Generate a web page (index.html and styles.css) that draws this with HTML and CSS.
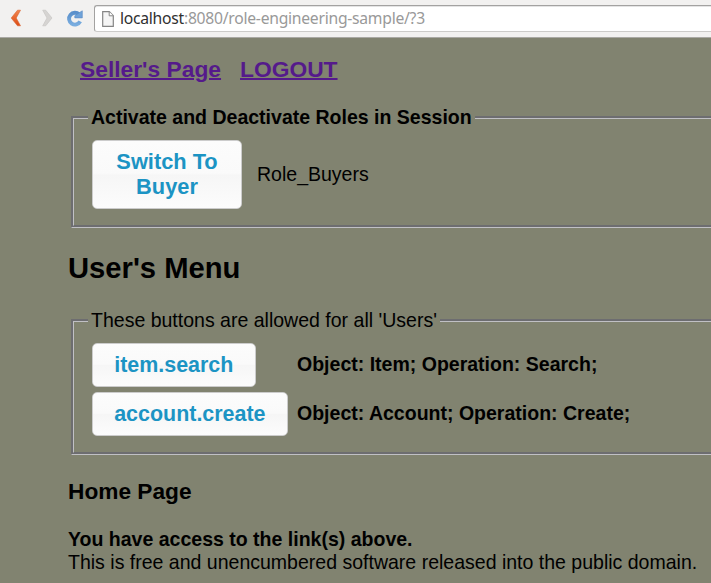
FILE: index.html
```html
<!DOCTYPE html>
<html lang="en">
<head>
<meta charset="utf-8">
<title>Home Page</title>
<link rel="stylesheet" href="styles.css">
</head>
<body>
<header class="toolbar">
  <svg class="nav-icons" width="94" height="37" viewBox="0 0 94 37" aria-hidden="true">
    <defs>
      <linearGradient id="warm" x1="0" y1="0" x2="0" y2="1"><stop offset="0" stop-color="#f2854f"/><stop offset="1" stop-color="#dc4c14"/></linearGradient>
      <linearGradient id="cool" x1="0" y1="0" x2="0" y2="1"><stop offset="0" stop-color="#5b90cb"/><stop offset="1" stop-color="#79addf"/></linearGradient>
    </defs>
    <path d="M17.5 10.2H20.5L16.2 18L20.5 25.8H17.5L11.2 18Z" fill="url(#warm)" stroke="#d9632f" stroke-width=".6" stroke-linejoin="round"/>
    <path d="M42.7 10.2H45.7L52 18L45.7 25.8H42.7L47 18Z" fill="#d6d4d2" stroke="#c5c3c1" stroke-width=".6" stroke-linejoin="round"/>
    <path d="M79.2 14.6A5.9 5.9 0 1 0 80.2 21.4" fill="none" stroke="url(#cool)" stroke-width="3.9"/>
    <path d="M82.3 10.8V17.9H74.8V15.8L80 12.2Z" fill="#6fa2d8" stroke="#5589c4" stroke-width=".6"/>
  </svg>
  <div class="address">
    <svg class="page-icon" width="12" height="16" viewBox="0 0 12 16" aria-hidden="true">
      <path d="M.7.7H7.3L11.3 4.7V15.3H.7Z" fill="#f5f5f5" stroke="#858585" stroke-width="1.2"/>
      <path d="M7.2.8V4.8H11.2" fill="#fff" stroke="#858585"/>
    </svg>
    <span class="url"><span class="host">localhost</span>:8080/role-engineering-sample/?3</span>
  </div>
</header>
<main class="page">
  <nav class="links"><a href="#">Seller's Page</a><a href="#">LOGOUT</a></nav>
  <fieldset class="roles">
    <legend><b>Activate and Deactivate Roles in Session</b></legend>
    <div class="role-row"><button class="btn switch">Switch To Buyer</button><span class="role">Role_Buyers</span></div>
  </fieldset>
  <h2>User's Menu</h2>
  <fieldset class="menu">
    <legend>These buttons are allowed for all 'Users'</legend>
    <div class="menu-grid">
      <button class="btn">item.search</button><b>Object: Item; Operation: Search;</b>
      <button class="btn">account.create</button><b>Object: Account; Operation: Create;</b>
    </div>
  </fieldset>
  <h3>Home Page</h3>
  <p><b>You have access to the link(s) above.</b><br>This is free and unencumbered software released into the public domain.</p>
</main>
</body>
</html>
```
FILE: styles.css
```css
* { box-sizing: border-box; }
body {
  margin: 0;
  height: 583px;
  overflow: hidden;
  background: #818370;
  color: #000;
  font: 19.53px/23px "Liberation Sans", Arial, sans-serif;
}
.toolbar {
  display: flex;
  height: 38px;
  background: #f2f1f0;
  border-bottom: 1px solid #aaa9a4;
}
.nav-icons { flex: none; }
.address {
  display: flex;
  flex: 1;
  height: 27px;
  margin-top: 5px;
  padding: 5px 0 0 7px;
  background: #fff;
  border: 1px solid #a3a2a1;
  border-right: 0;
  border-bottom-color: #cccbc9;
  border-radius: 3px 0 0 3px;
  box-shadow: inset 0 1px #e4e4e4;
}
.page-icon { flex: none; margin-right: 6px; }
.url {
  font: 15.7px/22px "Noto Sans", sans-serif;
  letter-spacing: -.26px;
  margin-top: -4px;
  color: #999;
  white-space: nowrap;
}
.host { color: #303030; }
.page { padding-left: 68px; }
.links {
  display: flex;
  gap: 19px;
  padding: 18px 0 0 12px;
  font-size: 22.8px;
  font-weight: bold;
  line-height: 26px;
}
.links a { color: #551a8b; text-decoration-thickness: 2px; }
fieldset {
  margin: 0 -3px 0 3px;
  padding: 0 0 0 18px;
  border: 3px groove #c0c0c4;
}
legend { margin-left: -4px; padding: 0 3px; line-height: 23px; }
.roles { height: 122px; margin-top: 24px; }
.role-row { display: flex; align-items: center; gap: 15px; margin-top: 11px; }
.btn {
  justify-self: start;
  height: 44px;
  padding: 0 21.2px;
  border: 1px solid #ccc;
  border-radius: 5px;
  background: linear-gradient(#fcfcfc 0%, #fafafa 48%, #f6f6f6 51%, #fcfcfc 100%);
  color: #1c94c4;
  font: bold 21.45px/25px "Liberation Sans", Arial, sans-serif;
}
.switch { width: 150px; height: 69px; padding-bottom: 1px; font-size: 21.8px; }
h2 { margin: 23px 0 0; font-size: 29.2px; line-height: 34px; }
.menu { height: 146px; margin-top: 24px; }
.menu-grid {
  display: grid;
  grid-template-columns: 196px auto;
  gap: 5px 9px;
  align-items: center;
  margin-top: 11px;
}
.menu-grid b { position: relative; top: -1px; }
h3 { margin: 23px 0 0; font-size: 22.7px; line-height: 27px; }
p { margin: 23px 0 0; white-space: nowrap; }
```
